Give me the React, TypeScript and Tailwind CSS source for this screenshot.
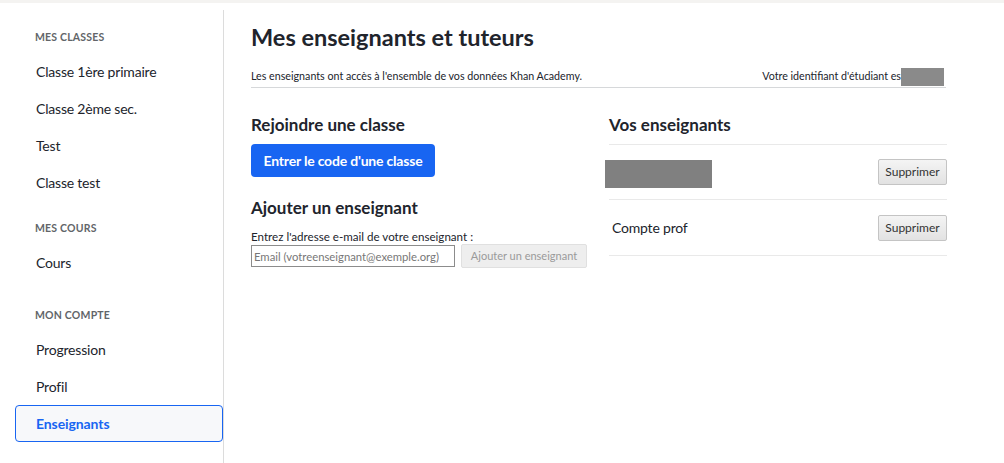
import React from "react";

const sections = [
  { title: "Mes classes", items: ["Classe 1ère primaire", "Classe 2ème sec.", "Test", "Classe test"], gap: "mb-[12px]" },
  { title: "Mes cours", items: ["Cours"], gap: "mb-[19px]" },
  { title: "Mon compte", items: ["Progression", "Profil", "Enseignants"], gap: "mb-0" },
];

function Sidebar() {
  return (
    <nav className="w-[224px] shrink-0 border-r border-[#dcdcdc] pt-[12px] pl-[15px]">
      {sections.map((s) => (
        <div key={s.title} className={s.gap}>
          <div className="h-[31px] pl-[20px] text-[10.5px] font-bold uppercase leading-[31px] tracking-[0.2px] text-[#626569]">
            {s.title}
          </div>
          {s.items.map((it) =>
            it === "Enseignants" ? (
              <div
                key={it}
                className="flex h-[37px] items-center rounded-[4px] border border-[#1865f2] bg-[#f7f8fa] pl-[20px] text-[14px] font-bold tracking-[-0.1px] text-[#1865f2]"
              >
                {it}
              </div>
            ) : (
              <div key={it} className="flex h-[37px] items-center pl-[21px] text-[14px] tracking-[-0.2px] text-[#21242c]">
                {it}
              </div>
            )
          )}
        </div>
      ))}
    </nav>
  );
}

function GreyButton({ children }: { children: React.ReactNode }) {
  return (
    <button className="h-[26px] w-[69px] rounded-[2px] border border-[#c4c4c4] bg-gradient-to-b from-[#f4f4f4] to-[#e2e2e2] text-[12px] text-[#333]">
      {children}
    </button>
  );
}

export default function App() {
  return (
    <div className="h-[463px] overflow-hidden bg-white font-['Lato','Liberation_Sans',sans-serif] text-[#21242c]">
      <div className="h-[3px] bg-[#f4f3f1]" />
      <div className="flex h-[460px] pt-[7px]">
        <Sidebar />
        <main className="w-[722px] pl-[27px]">
          <h1 className="mt-[12px] text-[23.5px] font-bold leading-[30px]">Mes enseignants et tuteurs</h1>
          <div className="mt-[14px] flex h-[22px] items-center justify-between border-b border-[#d6d8da] text-[10.7px]">
            <span>Les enseignants ont accès à l'ensemble de vos données Khan Academy.</span>
            <span className="mr-[2px] flex items-center">
              Votre identifiant d'étudiant es
              <span className="inline-block h-[18px] w-[43px] bg-[#8a8a8a]" />
            </span>
          </div>

          <div className="mt-[24px] flex gap-[20px]">
            <section className="w-[338px] shrink-0">
              <h2 className="text-[17px] font-bold leading-[26px]">Rejoindre une classe</h2>
              <button className="mt-[6px] h-[33px] w-[184px] rounded-[4px] bg-[#1865f2] text-[14px] font-bold tracking-[-0.2px] text-white">
                Entrer le code d'une classe
              </button>
              <h2 className="mt-[17px] text-[17px] font-bold leading-[28px]">Ajouter un enseignant</h2>
              <div className="mt-[7px] text-[11.6px] leading-[16px]">Entrez l'adresse e-mail de votre enseignant :</div>
              <div className="flex items-start gap-[6px]">
                <input
                  disabled
                  placeholder="Email (votreenseignant@exemple.org)"
                  className="h-[22px] w-[204px] border border-[#8c8c8c] bg-white px-[2px] font-['Lato',sans-serif] text-[11.3px] placeholder:text-[#777]"
                />
                <button className="-mt-[1px] h-[24px] w-[126px] rounded-[2px] border border-[#e0e0e0] bg-[#eeeeee] text-[11px] text-[#9a9a9a]">
                  Ajouter un enseignant
                </button>
              </div>
            </section>

            <section className="w-[338px] shrink-0">
              <h2 className="text-[17px] font-bold leading-[26px]">Vos enseignants</h2>
              <div className="mt-[6px] border-t border-[#e9e9e9]">
                <div className="flex h-[55px] items-center justify-between border-b border-[#e9e9e9]">
                  <span className="-ml-[4px] mt-[4px] inline-block h-[28px] w-[107px] bg-[#808080]" />
                  <GreyButton>Supprimer</GreyButton>
                </div>
                <div className="flex h-[56px] items-center justify-between border-b border-[#e9e9e9]">
                  <span className="pl-[3px] text-[14px] tracking-[-0.2px]">Compte prof</span>
                  <GreyButton>Supprimer</GreyButton>
                </div>
              </div>
            </section>
          </div>
        </main>
      </div>
    </div>
  );
}
